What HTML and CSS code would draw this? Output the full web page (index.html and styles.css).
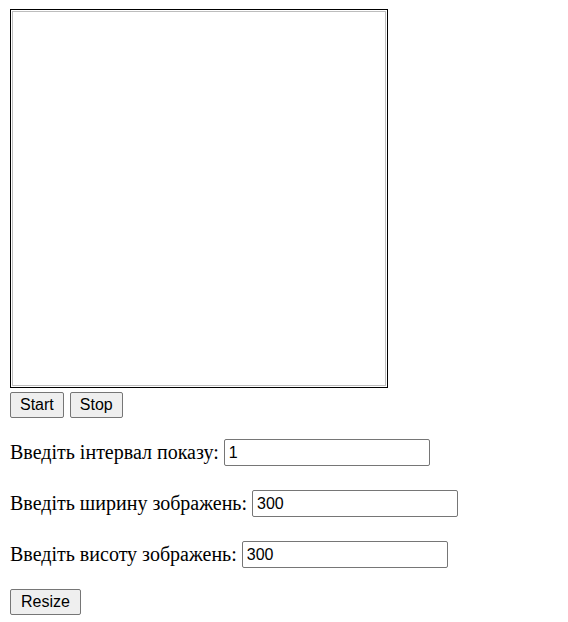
FILE: index.html
```html
<!DOCTYPE html>
<html>
<head>
<meta charset="utf-8">
<link rel="stylesheet" href="styles.css">
</head>
<body>
<div class="frame"><div class="view"></div></div>
<div class="controls">
  <button class="btn">Start</button>
  <button class="btn">Stop</button>
</div>
<p class="row">Введіть інтервал показу: <input class="field" type="text" value="1"></p>
<p class="row">Введіть ширину зображень: <input class="field" type="text" value="300"></p>
<p class="row">Введіть висоту зображень: <input class="field" type="text" value="300"></p>
<button class="btn resize">Resize</button>
</body>
</html>
```
FILE: styles.css
```css
body {
  margin: 8px;
  font-family: "Liberation Serif", "Times New Roman", serif;
  font-size: 20px;
  color: #000;
  background: #fff;
}
.frame {
  width: 378px;
  height: 379px;
  margin: 1px 0 0 2px;
  border: 1px solid #000;
  padding: 1px;
  box-sizing: border-box;
}
.view {
  width: 100%;
  height: 100%;
  border: 1px solid #bdbdbd;
  box-sizing: border-box;
}
.controls {
  display: flex;
  gap: 6px;
  margin: 4px 0 0 2px;
}
.btn {
  font-family: "Liberation Sans", Arial, sans-serif;
  font-size: 16px;
  line-height: 18px;
  height: 26px;
  padding: 3px 9px;
  border: 1px solid #767676;
  border-radius: 2px;
  background: #efefef;
  color: #000;
  margin: 0;
}
.row {
  margin: 21px 0 0 2px;
  height: 27px;
  display: flex;
  align-items: center;
  gap: 5px;
}
.row + .row { margin-top: 24px; }
.field {
  font-family: "Liberation Sans", Arial, sans-serif;
  font-size: 16px;
  width: 206px;
  height: 27px;
  box-sizing: border-box;
  border: 1px solid #767676;
  border-radius: 2px;
  padding: 1px 4px;
  margin: 0;
  color: #000;
}
.resize {
  margin: 21px 0 0 2px;
  padding: 3px 10px;
}
```
